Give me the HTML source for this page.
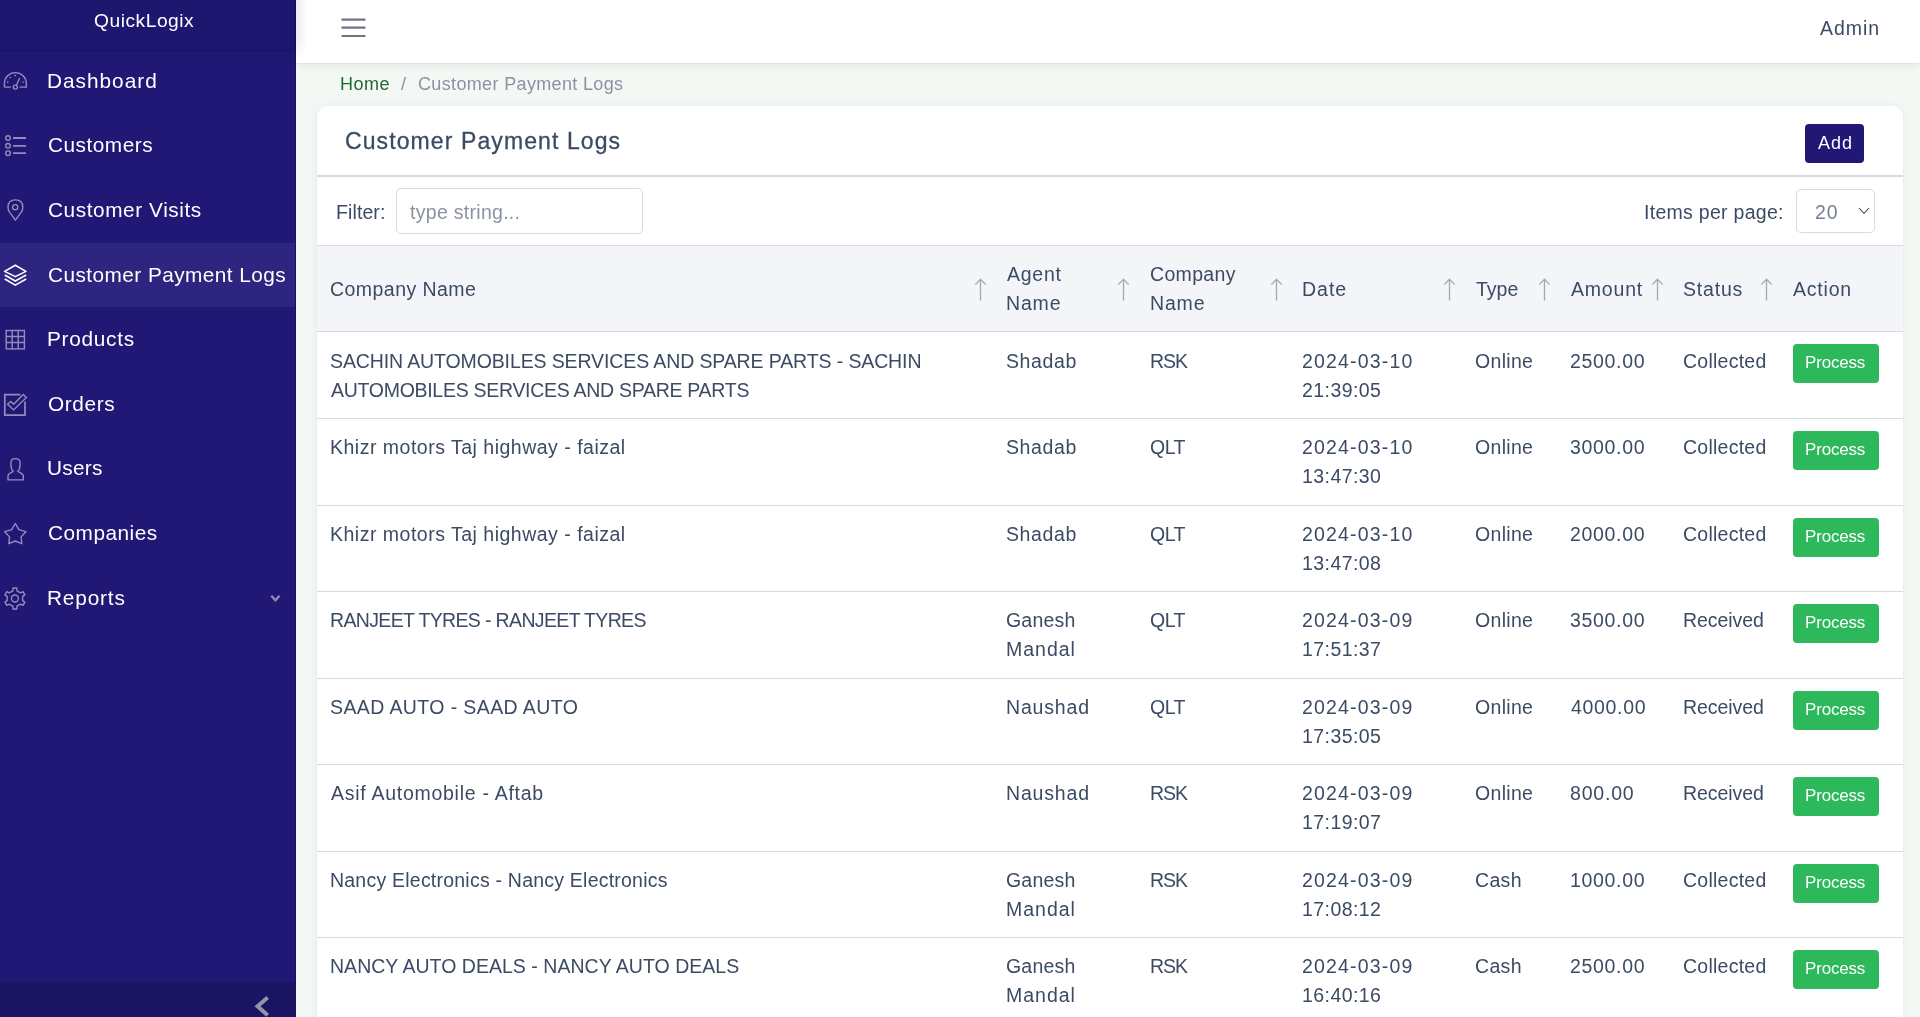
<!DOCTYPE html>
<html><head><meta charset="utf-8"><title>Customer Payment Logs</title>
<style>
*{box-sizing:border-box;margin:0;padding:0}
html,body{width:1920px;height:1017px;overflow:hidden}
body{font-family:"Liberation Sans",sans-serif;background:#f4f8f5;color:#3c4b64;position:relative}
.m{position:absolute;white-space:nowrap;will-change:transform}
.sb{position:absolute;left:0;top:0;width:296px;height:1017px;background:#211876;border-right:1px solid #17106b}
.brand{position:absolute;left:0;top:0;width:295px;height:49.5px;background:#1e176f;box-shadow:0 1px 1px rgba(0,0,0,.1),0 3px 7px rgba(0,0,0,.07)}
.act{position:absolute;left:0;top:243.2px;width:295px;height:63.8px;background:#2d257f}
.ic{position:absolute;left:0;width:32px;height:30px;fill:none;stroke:#918dbb;stroke-width:1.4}
.ic.on{stroke:#fff;stroke-width:1.6}
.foot{position:absolute;left:0;top:982px;width:295px;height:35px;background:#1b1463}
.hdr{position:absolute;left:296px;top:0;width:1624px;height:63px;background:#fff;box-shadow:0 1px 1px rgba(0,0,0,.03),0 2px 9px rgba(0,0,0,.07)}
.card{position:absolute;left:317px;top:106px;width:1586px;height:1000px;background:#fff;border-radius:11px;box-shadow:0 0 2px rgba(0,0,0,.05),0 1px 10px rgba(0,0,0,.06)}
.btn{position:absolute;border-radius:4px}
.ln{position:absolute;background:#d8dbe0}
.box{position:absolute;border:1px solid #d8dbe0;border-radius:5px;background:#fff}
.arr{position:absolute;top:277.5px;width:13px;height:23px}
</style></head><body>
<div class="sb"></div><div class="brand"></div>
<span class="m" style="left:93.73px;top:6.15px;font-size:19.2px;line-height:30px;color:#fff;letter-spacing:0.532px">QuickLogix</span><div class="act"></div>
<svg class="ic" viewBox="0 0 32 30" style="top:66px"><path d="M4.4,21.1 L4.4,17.6 A10.95,10.95 0 0 1 26.3,17.6 L26.3,21.1 L19.6,21.1 M4.4,21.1 L10.8,21.1"/><circle cx="15.3" cy="21.1" r="2.0"/><path d="M16.6,19.1 L19.6,12"/><path d="M10.3,11.5 h.1 M15.3,9.6 h.1 M7.7,16.1 h.1 M23,16.1 h.1" stroke-width="1.6" stroke-linecap="round"/></svg><span class="m" style="left:46.91px;top:65.79px;font-size:20.8px;line-height:30px;color:#fff;letter-spacing:1.000px">Dashboard</span>
<svg class="ic" viewBox="0 0 32 30" style="top:130px"><circle cx="8" cy="8" r="2.3"/><circle cx="8" cy="15.8" r="2.3"/><circle cx="8" cy="23.2" r="2.3"/><path d="M13,8 H26 M13,15.8 H26 M13,23.2 H26" stroke-width="1.8"/></svg><span class="m" style="left:47.81px;top:130.39px;font-size:20.8px;line-height:30px;color:#fff;letter-spacing:0.502px">Customers</span>
<svg class="ic" viewBox="0 0 32 30" style="top:195px"><path d="M15.4,25.1 L9.2,16.6 Q8,14.6 8,12.2 Q8,4.9 15.4,4.9 Q22.8,4.9 22.8,12.2 Q22.8,14.6 21.6,16.6 Z" stroke-linejoin="round"/><circle cx="15.2" cy="12.2" r="2.6"/></svg><span class="m" style="left:47.81px;top:194.99px;font-size:20.8px;line-height:30px;color:#fff;letter-spacing:0.571px">Customer Visits</span>
<svg class="ic on" viewBox="0 0 32 30" style="top:260px"><path d="M4.6,11.4 L15.3,5.2 L25.9,11.4 L15.3,16.6 Z" stroke-linejoin="round"/><path d="M5.2,15.3 L15.3,21 L25.7,15.3 M5.2,19.3 L15.3,25.1 L25.7,19.3" stroke-linecap="round"/></svg><span class="m" style="left:47.81px;top:259.59px;font-size:20.8px;line-height:30px;color:#fff;letter-spacing:0.440px">Customer Payment Logs</span>
<svg class="ic" viewBox="0 0 32 30" style="top:324px"><rect x="6.2" y="6.5" width="18.2" height="18.4"/><path d="M12.2,6.5 V24.9 M18.2,6.5 V24.9 M6.2,12.5 H24.4 M6.2,18.5 H24.4"/></svg><span class="m" style="left:46.91px;top:324.19px;font-size:20.8px;line-height:30px;color:#fff;letter-spacing:0.716px">Products</span>
<svg class="ic" viewBox="0 0 32 30" style="top:389px"><path d="M20.4,5.7 H4.8 V26.2 H25 V12.4" stroke-width="1.7"/><path d="M7.6,15.3 L10.8,12.4 L13.6,15.2 L23.3,5.6 L26.4,8.6 L13.6,20.9 Z" stroke-linejoin="miter"/></svg><span class="m" style="left:47.82px;top:388.79px;font-size:20.8px;line-height:30px;color:#fff;letter-spacing:0.600px">Orders</span>
<svg class="ic" viewBox="0 0 32 30" style="top:454px"><path d="M8,25.9 V21.8 Q8.3,19.8 10.5,18.8 L13.2,17.4 Q11,15.2 11,12 V8.6 Q11,4.6 15.5,4.6 Q20,4.6 20,8.6 V12 Q20,15.2 17.8,17.4 L20.5,18.8 Q23.3,20 23.3,22 V25.9 Z" stroke-linejoin="round"/></svg><span class="m" style="left:46.94px;top:453.39px;font-size:20.8px;line-height:30px;color:#fff;letter-spacing:0.250px">Users</span>
<svg class="ic" viewBox="0 0 32 30" style="top:518px"><path d="M15.3,5.5 L18.9,11.7 L25.9,13.7 L21.1,18.9 L21.8,25.7 L15.3,23 L8.9,25.7 L9.5,18.9 L4.7,13.7 L11.7,11.7 Z" stroke-linejoin="round"/></svg><span class="m" style="left:47.81px;top:517.99px;font-size:20.8px;line-height:30px;color:#fff;letter-spacing:0.502px">Companies</span>
<svg class="ic" viewBox="0 0 32 30" style="top:583px"><path d="M12.83,7.77 L13.06,5.06 L16.74,5.06 L16.97,7.77 L20.56,9.84 L23.02,8.69 L24.86,11.87 L22.63,13.43 L22.63,17.57 L24.86,19.13 L23.02,22.31 L20.56,21.16 L16.97,23.23 L16.74,25.94 L13.06,25.94 L12.83,23.23 L9.24,21.16 L6.78,22.31 L4.94,19.13 L7.17,17.57 L7.17,13.43 L4.94,11.87 L6.78,8.69 L9.24,9.84Z" stroke-linejoin="round"/><circle cx="14.9" cy="15.5" r="3.5"/></svg><span class="m" style="left:46.91px;top:582.59px;font-size:20.8px;line-height:30px;color:#fff;letter-spacing:0.833px">Reports</span>
<svg class="ic" viewBox="0 0 12 9" style="left:269.5px;top:594px;width:12px;height:9px;stroke-width:2.3"><path d="M1.3,1.8 L5.4,6.2 L9.5,1.8"/></svg>
<div class="foot"></div><svg viewBox="0 0 20 24" style="position:absolute;left:250px;top:993px;width:20px;height:24px;fill:none;stroke:#8e97a6;stroke-width:4"><path d="M17.6,4.6 L7.6,13.2 L17.6,22.2"/></svg>
<div class="hdr"></div><div style="position:absolute;left:296px;top:0;width:11px;height:58px;background:linear-gradient(to right,rgba(0,0,30,.075),rgba(0,0,30,0));-webkit-mask:linear-gradient(to bottom,#000 70%,transparent)"></div><svg style="position:absolute;left:340px;top:17px;width:26px;height:22px" viewBox="0 0 26 22"><path d="M2.4,2.7 H24.6 M2.4,10.7 H24.6 M2.4,19 H24.6" stroke="#717284" stroke-width="2.2" stroke-linecap="round"/></svg><span class="m" style="left:1820.13px;top:13.04px;font-size:19.5px;line-height:30px;color:#3c4b64;letter-spacing:0.950px">Admin</span>
<span class="m" style="left:340.32px;top:69.06px;font-size:18px;line-height:30px;color:#1f6b30;letter-spacing:0.533px">Home</span><span class="m" style="left:401.00px;top:69.06px;font-size:18px;line-height:30px;color:#8a93a2">/</span><span class="m" style="left:417.52px;top:69.06px;font-size:18px;line-height:30px;color:#8a93a2;letter-spacing:0.350px">Customer Payment Logs</span>
<div class="card"></div>
<span class="m" style="left:344.68px;top:125.63px;font-size:23px;line-height:30px;color:#3c4b64;letter-spacing:1.100px;-webkit-text-stroke:.3px #3c4b64">Customer Payment Logs</span><div class="btn" style="left:1805px;top:124px;width:59px;height:39px;background:#211876"></div><span class="m" style="left:1818.20px;top:127.86px;font-size:18px;line-height:30px;color:#fff;letter-spacing:1.000px">Add</span><div class="ln" style="left:317px;top:175px;width:1586px;height:1.5px"></div>
<span class="m" style="left:336.07px;top:196.54px;font-size:19.5px;line-height:30px;letter-spacing:0.101px">Filter:</span><div class="box" style="left:396px;top:188px;width:247px;height:45.5px"></div><span class="m" style="left:409.94px;top:196.54px;font-size:19.5px;line-height:30px;color:#8a93a2;letter-spacing:0.291px">type string...</span><span class="m" style="left:1644.25px;top:196.54px;font-size:19.5px;line-height:30px;letter-spacing:0.286px">Items per page:</span><div class="box" style="left:1795.5px;top:188.5px;width:79.5px;height:44.5px"></div><span class="m" style="left:1815.27px;top:196.54px;font-size:19.5px;line-height:30px;color:#768192;letter-spacing:1.000px">20</span><svg style="position:absolute;left:1857.5px;top:207px;width:12px;height:8px" viewBox="0 0 12 8"><path d="M1,1 L6,6.5 L11,1" fill="none" stroke="#3c4b64" stroke-width="1.1"/></svg>
<div class="ln" style="left:317px;top:245px;width:1586px;height:1px"></div><div style="position:absolute;left:317px;top:246px;width:1586px;height:85px;background:#f4f5f9"></div>
<span class="m" style="left:329.84px;top:273.54px;font-size:19.5px;line-height:30px;letter-spacing:0.453px">Company Name</span><span class="m" style="left:1007.25px;top:259.24px;font-size:19.5px;line-height:30px;letter-spacing:0.750px">Agent</span><span class="m" style="left:1006.43px;top:288.24px;font-size:19.5px;line-height:30px;letter-spacing:0.832px">Name</span><span class="m" style="left:1149.67px;top:259.24px;font-size:19.5px;line-height:30px;letter-spacing:0.333px">Company</span><span class="m" style="left:1149.63px;top:288.24px;font-size:19.5px;line-height:30px;letter-spacing:0.832px">Name</span><span class="m" style="left:1302.04px;top:273.54px;font-size:19.5px;line-height:30px;letter-spacing:1.000px">Date</span><span class="m" style="left:1475.53px;top:273.54px;font-size:19.5px;line-height:30px">Type</span><span class="m" style="left:1571.16px;top:273.54px;font-size:19.5px;line-height:30px;letter-spacing:0.800px">Amount</span><span class="m" style="left:1683.26px;top:273.54px;font-size:19.5px;line-height:30px;letter-spacing:0.800px">Status</span><span class="m" style="left:1793.16px;top:273.54px;font-size:19.5px;line-height:30px;letter-spacing:0.800px">Action</span><svg class="arr" viewBox="0 0 13 23" style="left:973.50px"><path d="M6.5,1.2 V22.5 M1.3,6.6 L6.5,1.2 L11.7,6.6" fill="none" stroke="#a3aab5" stroke-width="1.3"/></svg><svg class="arr" viewBox="0 0 13 23" style="left:1117.25px"><path d="M6.5,1.2 V22.5 M1.3,6.6 L6.5,1.2 L11.7,6.6" fill="none" stroke="#a3aab5" stroke-width="1.3"/></svg><svg class="arr" viewBox="0 0 13 23" style="left:1269.50px"><path d="M6.5,1.2 V22.5 M1.3,6.6 L6.5,1.2 L11.7,6.6" fill="none" stroke="#a3aab5" stroke-width="1.3"/></svg><svg class="arr" viewBox="0 0 13 23" style="left:1442.50px"><path d="M6.5,1.2 V22.5 M1.3,6.6 L6.5,1.2 L11.7,6.6" fill="none" stroke="#a3aab5" stroke-width="1.3"/></svg><svg class="arr" viewBox="0 0 13 23" style="left:1538.00px"><path d="M6.5,1.2 V22.5 M1.3,6.6 L6.5,1.2 L11.7,6.6" fill="none" stroke="#a3aab5" stroke-width="1.3"/></svg><svg class="arr" viewBox="0 0 13 23" style="left:1651.00px"><path d="M6.5,1.2 V22.5 M1.3,6.6 L6.5,1.2 L11.7,6.6" fill="none" stroke="#a3aab5" stroke-width="1.3"/></svg><svg class="arr" viewBox="0 0 13 23" style="left:1760.25px"><path d="M6.5,1.2 V22.5 M1.3,6.6 L6.5,1.2 L11.7,6.6" fill="none" stroke="#a3aab5" stroke-width="1.3"/></svg>
<div class="ln" style="left:317px;top:331px;width:1586px;height:1px"></div><span class="m" style="left:329.87px;top:346.24px;font-size:19.5px;line-height:30px;letter-spacing:-0.117px">SACHIN AUTOMOBILES SERVICES AND SPARE PARTS - SACHIN</span><span class="m" style="left:330.78px;top:375.24px;font-size:19.5px;line-height:30px;letter-spacing:-0.286px">AUTOMOBILES SERVICES AND SPARE PARTS</span><span class="m" style="left:1006.32px;top:346.24px;font-size:19.5px;line-height:30px;letter-spacing:0.600px">Shadab</span><span class="m" style="left:1149.64px;top:346.24px;font-size:19.5px;line-height:30px;letter-spacing:-1.000px">RSK</span><span class="m" style="left:1302.32px;top:346.24px;font-size:19.5px;line-height:30px;letter-spacing:1.167px">2024-03-10</span><span class="m" style="left:1302.32px;top:375.24px;font-size:19.5px;line-height:30px;letter-spacing:0.428px">21:39:05</span><span class="m" style="left:1474.61px;top:346.24px;font-size:19.5px;line-height:30px;letter-spacing:0.320px">Online</span><span class="m" style="left:1570.32px;top:346.24px;font-size:19.5px;line-height:30px;letter-spacing:0.666px">2500.00</span><span class="m" style="left:1683.22px;top:346.24px;font-size:19.5px;line-height:30px;letter-spacing:0.250px">Collected</span><div class="btn" style="left:1793px;top:343.75px;width:86px;height:39px;background:#2eb85c"></div><span class="m" style="left:1805.17px;top:348.41px;font-size:17px;line-height:30px;color:#fff;letter-spacing:-0.183px">Process</span>
<div class="ln" style="left:317px;top:418px;width:1586px;height:1px"></div><span class="m" style="left:329.87px;top:432.24px;font-size:19.5px;line-height:30px;letter-spacing:0.497px">Khizr motors Taj highway - faizal</span><span class="m" style="left:1006.32px;top:432.24px;font-size:19.5px;line-height:30px;letter-spacing:0.600px">Shadab</span><span class="m" style="left:1149.61px;top:432.24px;font-size:19.5px;line-height:30px;letter-spacing:-0.500px">QLT</span><span class="m" style="left:1302.32px;top:432.24px;font-size:19.5px;line-height:30px;letter-spacing:1.167px">2024-03-10</span><span class="m" style="left:1302.06px;top:461.24px;font-size:19.5px;line-height:30px;letter-spacing:0.428px">13:47:30</span><span class="m" style="left:1474.61px;top:432.24px;font-size:19.5px;line-height:30px;letter-spacing:0.320px">Online</span><span class="m" style="left:1570.44px;top:432.24px;font-size:19.5px;line-height:30px;letter-spacing:0.666px">3000.00</span><span class="m" style="left:1683.22px;top:432.24px;font-size:19.5px;line-height:30px;letter-spacing:0.250px">Collected</span><div class="btn" style="left:1793px;top:430.75px;width:86px;height:39px;background:#2eb85c"></div><span class="m" style="left:1805.17px;top:435.41px;font-size:17px;line-height:30px;color:#fff;letter-spacing:-0.183px">Process</span>
<div class="ln" style="left:317px;top:505px;width:1586px;height:1px"></div><span class="m" style="left:329.87px;top:519.24px;font-size:19.5px;line-height:30px;letter-spacing:0.497px">Khizr motors Taj highway - faizal</span><span class="m" style="left:1006.32px;top:519.24px;font-size:19.5px;line-height:30px;letter-spacing:0.600px">Shadab</span><span class="m" style="left:1149.61px;top:519.24px;font-size:19.5px;line-height:30px;letter-spacing:-0.500px">QLT</span><span class="m" style="left:1302.32px;top:519.24px;font-size:19.5px;line-height:30px;letter-spacing:1.167px">2024-03-10</span><span class="m" style="left:1302.06px;top:548.24px;font-size:19.5px;line-height:30px;letter-spacing:0.428px">13:47:08</span><span class="m" style="left:1474.61px;top:519.24px;font-size:19.5px;line-height:30px;letter-spacing:0.320px">Online</span><span class="m" style="left:1570.32px;top:519.24px;font-size:19.5px;line-height:30px;letter-spacing:0.666px">2000.00</span><span class="m" style="left:1683.22px;top:519.24px;font-size:19.5px;line-height:30px;letter-spacing:0.250px">Collected</span><div class="btn" style="left:1793px;top:517.75px;width:86px;height:39px;background:#2eb85c"></div><span class="m" style="left:1805.17px;top:522.41px;font-size:17px;line-height:30px;color:#fff;letter-spacing:-0.183px">Process</span>
<div class="ln" style="left:317px;top:591px;width:1586px;height:1px"></div><span class="m" style="left:329.87px;top:605.24px;font-size:19.5px;line-height:30px;letter-spacing:-0.643px">RANJEET TYRES - RANJEET TYRES</span><span class="m" style="left:1006.27px;top:605.24px;font-size:19.5px;line-height:30px;letter-spacing:0.200px">Ganesh</span><span class="m" style="left:1006.42px;top:634.24px;font-size:19.5px;line-height:30px;letter-spacing:1.000px">Mandal</span><span class="m" style="left:1149.61px;top:605.24px;font-size:19.5px;line-height:30px;letter-spacing:-0.500px">QLT</span><span class="m" style="left:1302.32px;top:605.24px;font-size:19.5px;line-height:30px;letter-spacing:1.167px">2024-03-09</span><span class="m" style="left:1302.06px;top:634.24px;font-size:19.5px;line-height:30px;letter-spacing:0.428px">17:51:37</span><span class="m" style="left:1474.61px;top:605.24px;font-size:19.5px;line-height:30px;letter-spacing:0.320px">Online</span><span class="m" style="left:1570.44px;top:605.24px;font-size:19.5px;line-height:30px;letter-spacing:0.666px">3500.00</span><span class="m" style="left:1683.04px;top:605.24px;font-size:19.5px;line-height:30px;letter-spacing:-0.054px">Received</span><div class="btn" style="left:1793px;top:603.75px;width:86px;height:39px;background:#2eb85c"></div><span class="m" style="left:1805.17px;top:608.41px;font-size:17px;line-height:30px;color:#fff;letter-spacing:-0.183px">Process</span>
<div class="ln" style="left:317px;top:678px;width:1586px;height:1px"></div><span class="m" style="left:329.87px;top:692.24px;font-size:19.5px;line-height:30px;letter-spacing:0.398px">SAAD AUTO - SAAD AUTO</span><span class="m" style="left:1006.42px;top:692.24px;font-size:19.5px;line-height:30px;letter-spacing:0.832px">Naushad</span><span class="m" style="left:1149.61px;top:692.24px;font-size:19.5px;line-height:30px;letter-spacing:-0.500px">QLT</span><span class="m" style="left:1302.32px;top:692.24px;font-size:19.5px;line-height:30px;letter-spacing:1.167px">2024-03-09</span><span class="m" style="left:1302.06px;top:721.24px;font-size:19.5px;line-height:30px;letter-spacing:0.428px">17:35:05</span><span class="m" style="left:1474.61px;top:692.24px;font-size:19.5px;line-height:30px;letter-spacing:0.320px">Online</span><span class="m" style="left:1571.06px;top:692.24px;font-size:19.5px;line-height:30px;letter-spacing:0.666px">4000.00</span><span class="m" style="left:1683.04px;top:692.24px;font-size:19.5px;line-height:30px;letter-spacing:-0.054px">Received</span><div class="btn" style="left:1793px;top:690.75px;width:86px;height:39px;background:#2eb85c"></div><span class="m" style="left:1805.17px;top:695.41px;font-size:17px;line-height:30px;color:#fff;letter-spacing:-0.183px">Process</span>
<div class="ln" style="left:317px;top:764px;width:1586px;height:1px"></div><span class="m" style="left:330.78px;top:778.24px;font-size:19.5px;line-height:30px;letter-spacing:0.726px">Asif Automobile - Aftab</span><span class="m" style="left:1006.42px;top:778.24px;font-size:19.5px;line-height:30px;letter-spacing:0.832px">Naushad</span><span class="m" style="left:1149.64px;top:778.24px;font-size:19.5px;line-height:30px;letter-spacing:-1.000px">RSK</span><span class="m" style="left:1302.32px;top:778.24px;font-size:19.5px;line-height:30px;letter-spacing:1.167px">2024-03-09</span><span class="m" style="left:1302.06px;top:807.24px;font-size:19.5px;line-height:30px;letter-spacing:0.428px">17:19:07</span><span class="m" style="left:1474.61px;top:778.24px;font-size:19.5px;line-height:30px;letter-spacing:0.320px">Online</span><span class="m" style="left:1570.28px;top:778.24px;font-size:19.5px;line-height:30px;letter-spacing:0.800px">800.00</span><span class="m" style="left:1683.04px;top:778.24px;font-size:19.5px;line-height:30px;letter-spacing:-0.054px">Received</span><div class="btn" style="left:1793px;top:776.75px;width:86px;height:39px;background:#2eb85c"></div><span class="m" style="left:1805.17px;top:781.41px;font-size:17px;line-height:30px;color:#fff;letter-spacing:-0.183px">Process</span>
<div class="ln" style="left:317px;top:851px;width:1586px;height:1px"></div><span class="m" style="left:329.87px;top:865.24px;font-size:19.5px;line-height:30px;letter-spacing:0.223px">Nancy Electronics - Nancy Electronics</span><span class="m" style="left:1006.27px;top:865.24px;font-size:19.5px;line-height:30px;letter-spacing:0.200px">Ganesh</span><span class="m" style="left:1006.42px;top:894.24px;font-size:19.5px;line-height:30px;letter-spacing:1.000px">Mandal</span><span class="m" style="left:1149.64px;top:865.24px;font-size:19.5px;line-height:30px;letter-spacing:-1.000px">RSK</span><span class="m" style="left:1302.32px;top:865.24px;font-size:19.5px;line-height:30px;letter-spacing:1.167px">2024-03-09</span><span class="m" style="left:1302.06px;top:894.24px;font-size:19.5px;line-height:30px;letter-spacing:0.428px">17:08:12</span><span class="m" style="left:1474.67px;top:865.24px;font-size:19.5px;line-height:30px;letter-spacing:0.334px">Cash</span><span class="m" style="left:1570.06px;top:865.24px;font-size:19.5px;line-height:30px;letter-spacing:0.666px">1000.00</span><span class="m" style="left:1683.22px;top:865.24px;font-size:19.5px;line-height:30px;letter-spacing:0.250px">Collected</span><div class="btn" style="left:1793px;top:863.75px;width:86px;height:39px;background:#2eb85c"></div><span class="m" style="left:1805.17px;top:868.41px;font-size:17px;line-height:30px;color:#fff;letter-spacing:-0.183px">Process</span>
<div class="ln" style="left:317px;top:937px;width:1586px;height:1px"></div><span class="m" style="left:329.87px;top:951.24px;font-size:19.5px;line-height:30px;letter-spacing:0.030px">NANCY AUTO DEALS - NANCY AUTO DEALS</span><span class="m" style="left:1006.27px;top:951.24px;font-size:19.5px;line-height:30px;letter-spacing:0.200px">Ganesh</span><span class="m" style="left:1006.42px;top:980.24px;font-size:19.5px;line-height:30px;letter-spacing:1.000px">Mandal</span><span class="m" style="left:1149.64px;top:951.24px;font-size:19.5px;line-height:30px;letter-spacing:-1.000px">RSK</span><span class="m" style="left:1302.32px;top:951.24px;font-size:19.5px;line-height:30px;letter-spacing:1.167px">2024-03-09</span><span class="m" style="left:1302.06px;top:980.24px;font-size:19.5px;line-height:30px;letter-spacing:0.428px">16:40:16</span><span class="m" style="left:1474.67px;top:951.24px;font-size:19.5px;line-height:30px;letter-spacing:0.334px">Cash</span><span class="m" style="left:1570.32px;top:951.24px;font-size:19.5px;line-height:30px;letter-spacing:0.666px">2500.00</span><span class="m" style="left:1683.22px;top:951.24px;font-size:19.5px;line-height:30px;letter-spacing:0.250px">Collected</span><div class="btn" style="left:1793px;top:949.75px;width:86px;height:39px;background:#2eb85c"></div><span class="m" style="left:1805.17px;top:954.41px;font-size:17px;line-height:30px;color:#fff;letter-spacing:-0.183px">Process</span>
<div class="ln" style="left:317px;top:937px;width:1586px;height:1px"></div>
</body></html>
